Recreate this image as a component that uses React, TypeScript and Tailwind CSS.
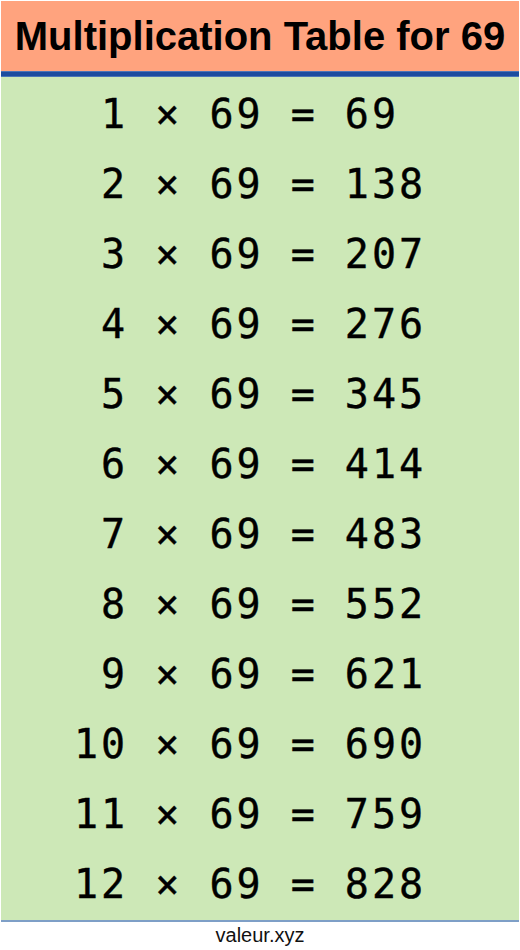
const rows = Array.from({ length: 12 }, (_, i) => i + 1);

export default function App() {
  return (
    <div className="w-[520px] bg-white">
      <div className="mx-px mt-px">
        <div className="h-[70px] bg-[#ffa37e] flex items-center justify-center">
          <h1 className="font-['Liberation_Sans',Arial,sans-serif] font-bold text-[40px] leading-none text-black">
            Multiplication Table for 69
          </h1>
        </div>
        <div className="h-[6px] bg-[#1c4c9f] border-y border-[#4a74b8]" />
        <div className="bg-[#cde8b7] pt-[2px] pb-px border-b-2 border-[#7e9fc7]">
          {rows.map((n) => (
            <div
              key={n}
              className="h-[70px] flex items-center pl-[73px] whitespace-pre font-['DejaVu_Sans_Mono',monospace] text-[40px] tracking-[3px] text-black [-webkit-text-stroke:0.4px_black]"
            >
              {`${String(n).padStart(2)} × 69 = ${n * 69}`}
            </div>
          ))}
        </div>
        <div className="text-center font-['Liberation_Sans',Arial,sans-serif] text-[20px] leading-[26px] text-[#111]">
          valeur.xyz
        </div>
      </div>
    </div>
  );
}
